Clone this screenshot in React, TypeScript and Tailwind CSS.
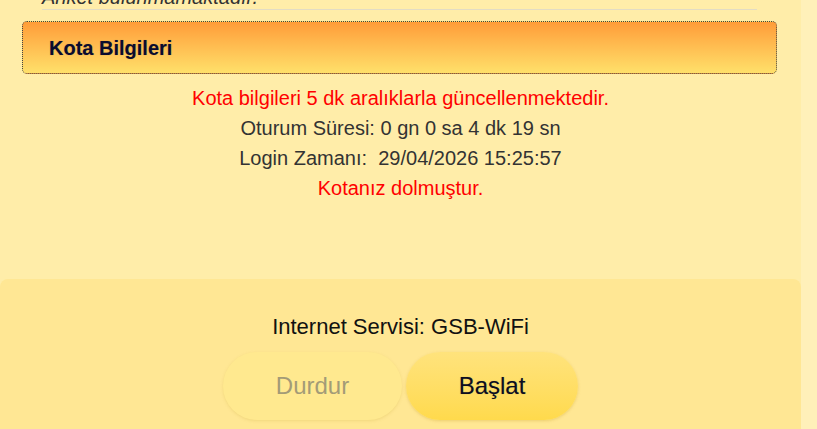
export default function App() {
  return (
    <div
      className="flex h-[429px] w-[817px] overflow-hidden bg-[#fff0b9]"
      style={{ fontFamily: '"Liberation Sans", Arial, sans-serif' }}
    >
      <div className="flex w-[801px] flex-col bg-[#ffeda9]">
        {/* survey block, scrolled mostly out of view */}
        <div className="-mt-[13px] ml-[42px] mr-[44px] border-b border-[#e2dcc4] pb-[2px] text-[20px] leading-[20px] italic text-[#333]">
          Anket bulunmamaktadır.
        </div>

        <div className="ml-[22px] mr-[24px] mt-[11px] flex h-[53px] items-center rounded-[5px] border border-dotted border-[#444] bg-gradient-to-b from-[#ff9c38] to-[#ffe06a] pl-[26px]">
          <span className="text-[20px] font-bold text-[#0b0b2e] [text-shadow:0_0_1px_rgba(0,60,80,0.35)]">
            Kota Bilgileri
          </span>
        </div>

        <div className="mt-[9px] flex flex-col items-center text-[20px] leading-[30px]">
          <div className="text-[#ff0000]">Kota bilgileri 5 dk aralıklarla güncellenmektedir.</div>
          <div className="text-[#333]">Oturum Süresi: 0 gn 0 sa 4 dk 19 sn</div>
          <div className="text-[#333]">Login Zamanı:&nbsp; 29/04/2026 15:25:57</div>
          <div className="text-[#ff0000]">Kotanız dolmuştur.</div>
        </div>

        <div className="mt-auto flex h-[150px] flex-col items-center rounded-t-[8px] bg-[#ffe794] pt-[33px]">
          <div className="text-[22px] leading-[30px] text-[#111]">Internet Servisi: GSB-WiFi</div>
          <div className="mt-[10px] flex gap-[4px]">
            <button
              type="button"
              disabled
              className="h-[68px] w-[179px] rounded-full bg-[#ffe98f] text-[24px] text-[#a39b77] shadow-[0_1px_3px_rgba(200,170,60,0.25)]"
            >
              Durdur
            </button>
            <button
              type="button"
              className="h-[68px] w-[172px] rounded-full bg-gradient-to-b from-[#ffe37c] to-[#ffda4c] text-[24px] text-[#0d0d1f] shadow-[0_1px_3px_rgba(200,160,40,0.35)] [text-shadow:0_0_1px_rgba(0,60,80,0.35)]"
            >
              Başlat
            </button>
          </div>
        </div>
      </div>
      <div className="flex-1" />
    </div>
  )
}
